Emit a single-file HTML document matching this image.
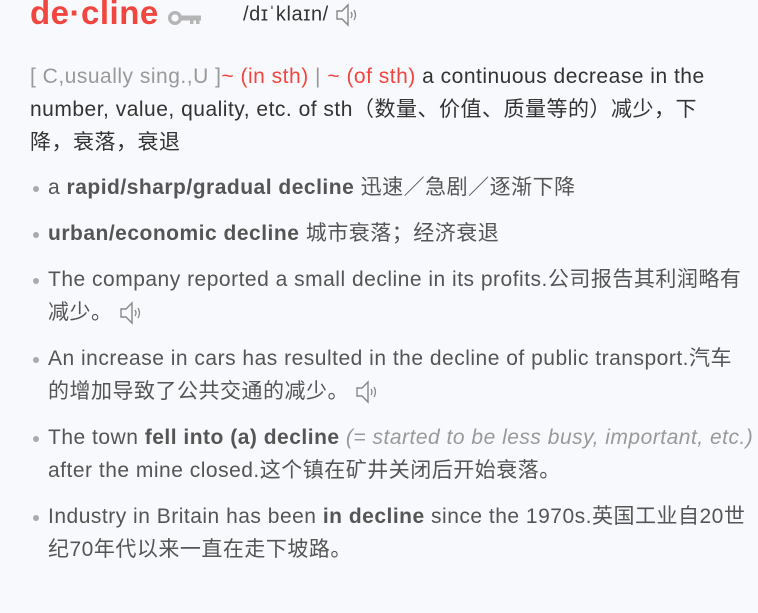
<!DOCTYPE html>
<html><head><meta charset="utf-8"><style>
body{margin:0;background:#f8f9fc;width:758px;height:613px;overflow:hidden;font-family:"Liberation Sans","Noto Sans CJK SC",sans-serif;color:#333;}
.hw{position:absolute;left:30px;top:-6px;font-size:33px;font-weight:bold;color:#f0463f;letter-spacing:0.5px}
.key{position:absolute;left:168px;top:11px}
.ph{position:absolute;left:243px;top:3px;font-size:20px;letter-spacing:0.6px;color:#333}
.spk{display:inline-block;vertical-align:middle}
.def{position:absolute;left:30px;top:60px;font-size:21px;letter-spacing:0.5px;line-height:33px;white-space:nowrap}
.g{color:#999}.r{color:#f0463f}
ul{position:absolute;left:30px;top:171px;margin:0;padding:0;list-style:none;font-size:21px;letter-spacing:0.5px;line-height:33px;color:#555;white-space:nowrap}
li{position:relative;padding-left:18px;margin-bottom:13px}
li:before{content:"";position:absolute;left:3px;top:15px;width:6px;height:6px;border-radius:50%;background:#aaa}
b{color:#555}
i{color:#999}
</style></head><body>
<div class="hw">de·cline</div>
<svg class="key" width="34" height="14" viewBox="0 0 34 14"><circle cx="7" cy="7" r="5.3" fill="none" stroke="#b5b5b5" stroke-width="3.4"/><rect x="12" y="4.5" width="21" height="5" fill="#b5b5b5"/><rect x="22" y="8" width="3.5" height="5" fill="#b5b5b5"/><rect x="28" y="8" width="3.5" height="5" fill="#b5b5b5"/></svg>
<div class="ph">/dɪˈklaɪn/ <svg class="spk" width="26" height="24" viewBox="0 0 26 24"><path d="M2 8h5l6-6v20l-6-6H2z" fill="none" stroke="#888" stroke-width="1.4"/><path d="M16 9q2 3 0 6M19 7q3 5 0 10" fill="none" stroke="#888" stroke-width="1.3"/></svg></div>
<div class="def"><span class="g">[ C,usually sing.,U ]</span><span class="r">~ (in sth)</span> <span class="g">|</span> <span class="r">~ (of sth)</span> a continuous decrease in the<br>number, value, quality, etc. of sth（数量、价值、质量等的）减少，下<br>降，衰落，衰退</div>
<ul>
<li>a <b>rapid/sharp/gradual decline</b> 迅速／急剧／逐渐下降</li>
<li><b>urban/economic decline</b> 城市衰落；经济衰退</li>
<li>The company reported a small decline in its profits.公司报告其利润略有<br>减少。 <svg class="spk" width="26" height="24" viewBox="0 0 26 24"><path d="M2 8h5l6-6v20l-6-6H2z" fill="none" stroke="#888" stroke-width="1.4"/><path d="M16 9q2 3 0 6M19 7q3 5 0 10" fill="none" stroke="#888" stroke-width="1.3"/></svg></li>
<li>An increase in cars has resulted in the decline of public transport.汽车<br>的增加导致了公共交通的减少。 <svg class="spk" width="26" height="24" viewBox="0 0 26 24"><path d="M2 8h5l6-6v20l-6-6H2z" fill="none" stroke="#888" stroke-width="1.4"/><path d="M16 9q2 3 0 6M19 7q3 5 0 10" fill="none" stroke="#888" stroke-width="1.3"/></svg></li>
<li>The town <b>fell into (a) decline</b> <i>(= started to be less busy, important, etc.)</i><br>after the mine closed.这个镇在矿井关闭后开始衰落。</li>
<li>Industry in Britain has been <b>in decline</b> since the 1970s.英国工业自20世<br>纪70年代以来一直在走下坡路。</li>
</ul>
</body></html>
